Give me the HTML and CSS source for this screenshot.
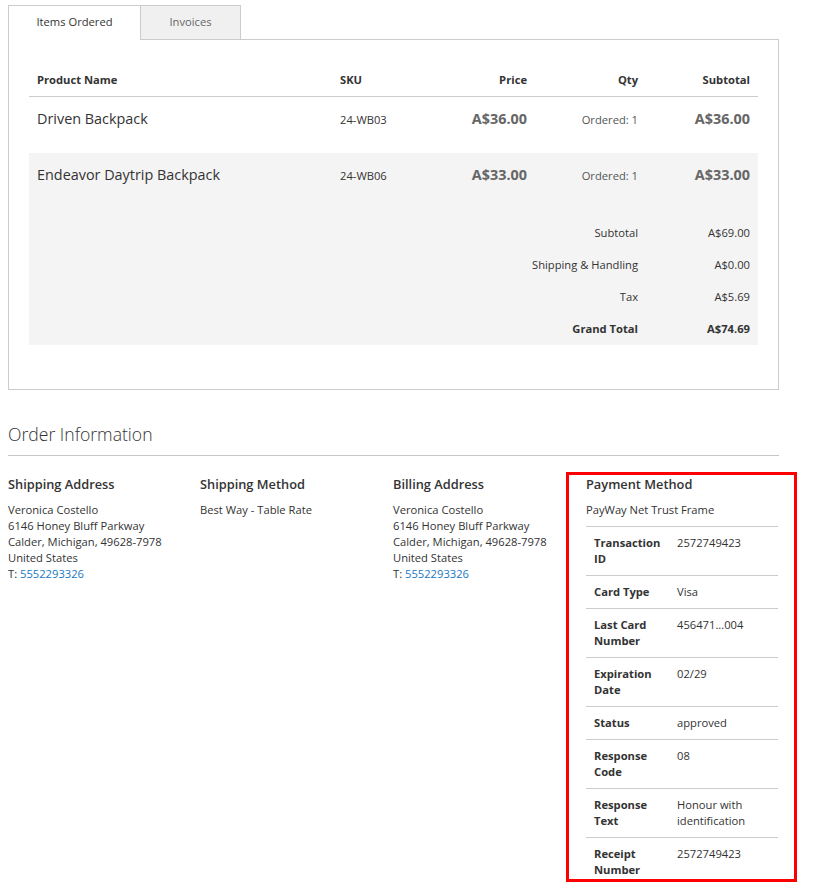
FILE: index.html
```html
<!DOCTYPE html>
<html lang="en">
<head>
<meta charset="utf-8">
<title>Order</title>
<link rel="stylesheet" href="styles.css">
</head>
<body>
<div class="page">
  <div class="tabs">
    <div class="tab tab-active">Items Ordered</div>
    <div class="tab tab-inactive">Invoices</div>
    <div class="tab-filler"></div>
  </div>
  <div class="tab-content">
    <table class="items">
      <colgroup>
        <col class="c-name"><col class="c-sku"><col class="c-price"><col class="c-qty"><col class="c-sub">
      </colgroup>
      <thead>
        <tr>
          <th class="left">Product Name</th>
          <th class="left">SKU</th>
          <th class="right">Price</th>
          <th class="right">Qty</th>
          <th class="right">Subtotal</th>
        </tr>
      </thead>
      <tbody>
        <tr class="row-first">
          <td class="name">Driven Backpack</td>
          <td class="sku">24-WB03</td>
          <td class="price right">A$36.00</td>
          <td class="qty right">Ordered: 1</td>
          <td class="price right">A$36.00</td>
        </tr>
        <tr class="alt">
          <td class="name">Endeavor Daytrip Backpack</td>
          <td class="sku">24-WB06</td>
          <td class="price right">A$33.00</td>
          <td class="qty right">Ordered: 1</td>
          <td class="price right">A$33.00</td>
        </tr>
      </tbody>
      <tfoot>
        <tr class="first">
          <td colspan="4" class="right">Subtotal</td>
          <td class="right">A$69.00</td>
        </tr>
        <tr>
          <td colspan="4" class="right">Shipping &amp; Handling</td>
          <td class="right">A$0.00</td>
        </tr>
        <tr>
          <td colspan="4" class="right">Tax</td>
          <td class="right">A$5.69</td>
        </tr>
        <tr class="last grand">
          <td colspan="4" class="right">Grand Total</td>
          <td class="right">A$74.69</td>
        </tr>
      </tfoot>
    </table>
  </div>

  <div class="order-info">
    <h2 class="info-title">Order Information</h2>
    <div class="boxes">
      <div class="box">
        <div class="box-title">Shipping Address</div>
        <div class="box-body">
          Veronica Costello<br>
          6146 Honey Bluff Parkway<br>
          Calder, Michigan, 49628-7978<br>
          United States<br>
          T: <a class="link" href="#">5552293326</a>
        </div>
      </div>
      <div class="box">
        <div class="box-title">Shipping Method</div>
        <div class="box-body">Best Way - Table Rate</div>
      </div>
      <div class="box">
        <div class="box-title">Billing Address</div>
        <div class="box-body">
          Veronica Costello<br>
          6146 Honey Bluff Parkway<br>
          Calder, Michigan, 49628-7978<br>
          United States<br>
          T: <a class="link" href="#">5552293326</a>
        </div>
      </div>
      <div class="box box-payment">
        <div class="box-title">Payment Method</div>
        <div class="box-body pay-name">PayWay Net Trust Frame</div>
        <table class="pay">
          <tr><th>Transaction ID</th><td>2572749423</td></tr>
          <tr><th>Card Type</th><td>Visa</td></tr>
          <tr><th>Last Card Number</th><td>456471...004</td></tr>
          <tr><th>Expiration Date</th><td>02/29</td></tr>
          <tr><th>Status</th><td>approved</td></tr>
          <tr><th>Response Code</th><td>08</td></tr>
          <tr><th>Response Text</th><td>Honour with identification</td></tr>
          <tr class="pay-last"><th>Receipt Number</th><td>2572749423</td></tr>
        </table>
      </div>
    </div>
  </div>
</div>
</body>
</html>
```

FILE: styles.css
```css
html, body {
  margin: 0;
  padding: 0;
  overflow: hidden;
}
body {
  font-family: "Open Sans", "DejaVu Sans", sans-serif;
  font-size: 11.2px;
  line-height: 16px;
  color: #333;
  background: #fff;
}
.page {
  width: 771px;
  padding: 5px 0 0 8px;
}

/* Tabs */
.tabs {
  display: flex;
  height: 35px;
}
.tab {
  box-sizing: border-box;
  height: 35px;
  line-height: 32px;
  text-align: center;
  font-size: 11.2px;
}
.tab-active {
  width: 133px;
  background: #fff;
  color: #333;
  border: 1px solid #ccc;
  border-bottom: 0;
}
.tab-inactive {
  width: 100px;
  background: #f0f0f0;
  color: #666;
  border-top: 1px solid #ccc;
  border-right: 1px solid #ccc;
  border-bottom: 1px solid #ccc;
}
.tab-filler {
  flex: 1;
  border-bottom: 1px solid #ccc;
}
.tab-content {
  box-sizing: border-box;
  width: 771px;
  border: 1px solid #ccc;
  border-top: 0;
  padding: 20px 20px 44px 20px;
}

/* Items table */
.items {
  width: 729px;
  table-layout: fixed;
  border-collapse: collapse;
}
.c-name { width: 303px; }
.c-sku { width: 90px; }
.c-price { width: 113px; }
.c-qty { width: 111px; }
.c-sub { width: 112px; }
.items th {
  font-weight: 700;
  padding: 12px 8px 8px;
  line-height: 16px;
  border-bottom: 1px solid #ccc;
}
.left { text-align: left; }
.right { text-align: right; }
.items tbody td {
  vertical-align: top;
  padding: 12px 8px 24px;
  line-height: 20px;
}
.items tbody tr.row-first td {
  padding-bottom: 23px;
}
.items tbody td.name {
  font-size: 14.4px;
  color: #333;
}
.items tbody td.sku {
  padding-top: 13px;
}
.items tbody td.price {
  font-size: 14.4px;
  font-weight: 700;
  color: #666;
}
.items tbody td.qty {
  padding-top: 13px;
  color: #555;
}
.items tbody tr.alt td {
  background: #f4f4f4;
}
.items tfoot td {
  background: #f4f4f4;
  padding: 8px;
  line-height: 16px;
}
.items tfoot tr.first td {
  padding-top: 15px;
}
.items tfoot tr.last td {
  padding-bottom: 8px;
}
.items tfoot tr.grand td {
  font-weight: 700;
}

/* Order information */
.order-info {
  margin-top: 32px;
}
.info-title {
  margin: 0;
  font-size: 17.6px;
  font-weight: 300;
  line-height: 24px;
  padding-bottom: 9px;
  border-bottom: 1px solid #c6c6c6;
}
.boxes {
  display: grid;
  grid-template-columns: 192px 193px 193px 193px;
  margin-top: 19px;
}
.box-title {
  font-size: 12.8px;
  font-weight: 600;
  line-height: 18px;
  margin-bottom: 9px;
}
.box-body {
  line-height: 16px;
}
.link {
  color: #1979c3;
  text-decoration: none;
}
.box-payment {
  position: relative;
}
.box-payment::after {
  content: "";
  position: absolute;
  top: -3px;
  left: -20px;
  width: 231px;
  height: 410px;
  box-sizing: border-box;
  border: 3px solid #ff0000;
  pointer-events: none;
}
.pay-name {
  padding-bottom: 8px;
  border-bottom: 1px solid #ccc;
  width: 192px;
}
.pay {
  width: 192px;
  table-layout: fixed;
  border-collapse: collapse;
}
.pay th, .pay td {
  text-align: left;
  vertical-align: top;
  padding: 8px;
  line-height: 16px;
  border-bottom: 1px solid #ccc;
}
.pay tr.pay-last th, .pay tr.pay-last td {
  border-bottom: 0;
}
.pay th {
  width: 67px;
  font-weight: 700;
}
```
